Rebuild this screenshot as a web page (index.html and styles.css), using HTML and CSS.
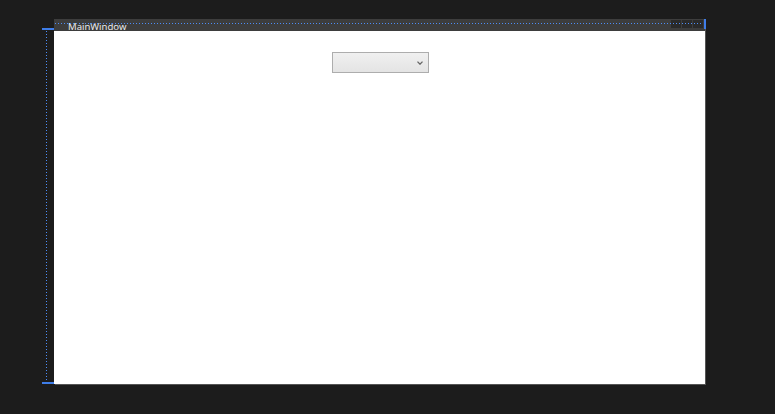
FILE: index.html
```html
<!DOCTYPE html>
<html>
<head>
<meta charset="utf-8">
<link rel="stylesheet" href="styles.css">
</head>
<body>
<div class="stage">
  <div class="window">
    <div class="titlebar">
      <span class="title">MainWindow</span>
      <div class="buttons">
        <span class="btn"></span><span class="btn"></span><span class="btn"></span>
      </div>
    </div>
    <div class="client">
      <div class="combo">
        <svg class="chev" width="6" height="4" viewBox="0 0 6 4"><path d="M0.5 0.6 L3 3.2 L5.5 0.6" fill="none" stroke="#666" stroke-width="1.3"/></svg>
      </div>
    </div>
  </div>
  <div class="adorn-top"></div>
  <div class="adorn-right"></div>
  <div class="adorn-left"></div>
  <div class="adorn-tick tick-top"></div>
  <div class="adorn-tick tick-bottom"></div>
</div>
</body>
</html>
```
FILE: styles.css
```css
html, body {
  margin: 0;
  padding: 0;
  background: #1c1c1c;
  width: 775px;
  height: 414px;
  overflow: hidden;
}
.stage {
  position: relative;
  width: 775px;
  height: 414px;
  padding: 19px 0 0 54px;
  box-sizing: border-box;
}
.window {
  width: 651px;
  display: flex;
  flex-direction: column;
  box-shadow: 1px 1px 0 #555;
}
.titlebar {
  height: 12px;
  background: #3d3d3d;
  display: flex;
  align-items: flex-start;
  justify-content: space-between;
  position: relative;
}
.title {
  font-family: "Open Sans", "Liberation Sans", sans-serif;
  font-size: 9.6px;
  line-height: 12px;
  color: #f2f2f2;
  margin-left: 14px;
  margin-top: 2px;
}
.buttons {
  display: flex;
  gap: 1px;
  margin-top: 1px;
  margin-right: 2px;
}
.btn {
  width: 10px;
  height: 8px;
  background: #2a2a2a;
}
.client {
  height: 353px;
  background: #ffffff;
  display: flex;
  justify-content: center;
  align-items: flex-start;
}
.combo {
  margin-top: 21px;
  margin-left: 1px;
  width: 95px;
  height: 19px;
  border: 1px solid #adadad;
  background: linear-gradient(#f0f0f0, #e4e4e4);
  position: relative;
}
.chev {
  position: absolute;
  right: 5px;
  top: 8px;
}
.adorn-top {
  position: absolute;
  left: 55px;
  top: 23px;
  width: 648px;
  height: 1px;
  background: repeating-linear-gradient(90deg, #4d8cf5 0 1px, transparent 1px 3px);
}
.adorn-right {
  position: absolute;
  left: 704px;
  top: 19px;
  width: 2px;
  height: 10px;
  background: #3f7de8;
}
.adorn-left {
  position: absolute;
  left: 46px;
  top: 31px;
  width: 1px;
  height: 352px;
  background: repeating-linear-gradient(180deg, #4d8cf5 0 1px, transparent 1px 3px);
}
.adorn-tick {
  position: absolute;
  left: 42px;
  width: 12px;
  height: 2px;
  background: #3f7de8;
}
.tick-top { top: 28px; }
.tick-bottom { top: 382px; }
```
